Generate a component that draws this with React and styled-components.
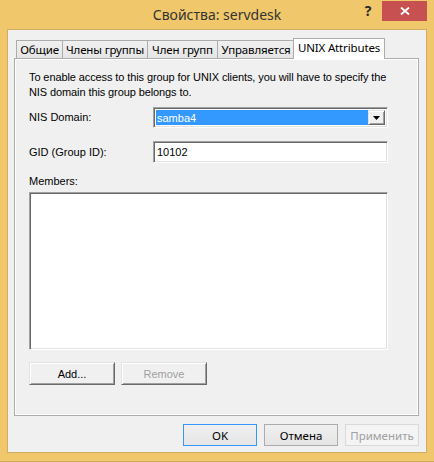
import React from 'react';
import styled, { createGlobalStyle } from 'styled-components';

const Global = createGlobalStyle`
  html, body { margin: 0; padding: 0; background: #ffffff; }
  body { width: 434px; height: 462px; overflow: hidden; }
  * { box-sizing: border-box; }
`;

const uiFont = `"Segoe UI", "Noto Sans", "Liberation Sans", sans-serif`;
const dlgFont = `"Liberation Sans", Arial, sans-serif`;

const Frame = styled.div`
  width: 434px;
  height: 462px;
  background: #f0c86b;
  border-bottom: 1px solid #d2ad58;
  padding: 0 7px 8px 7px;
  display: flex;
  flex-direction: column;
`;

const TitleBar = styled.div`
  height: 29px;
  display: grid;
  grid-template-columns: 1fr auto 1fr;
  align-items: start;
`;

const Title = styled.div`
  grid-column: 2;
  font-family: ${uiFont};
  font-size: 14px;
  color: #333333;
  line-height: 30px;
  white-space: nowrap;
`;

const Controls = styled.div`
  grid-column: 3;
  justify-self: end;
  display: flex;
  align-items: flex-start;
`;

const HelpButton = styled.div`
  width: 28px;
  height: 21px;
  display: flex;
  align-items: center;
  justify-content: center;
  font-family: ${uiFont};
  font-weight: bold;
  font-size: 14px;
  color: #2a2a2a;
`;

const CloseButton = styled.div`
  width: 45px;
  height: 20px;
  margin-top: 1px;
  background: #c75050;
  display: flex;
  align-items: center;
  justify-content: center;
`;

const Client = styled.div`
  flex: 1;
  border: 1px solid #cfae62;
  background: #f0f0f0;
  padding: 8px 7px 6px 6px;
  display: flex;
  flex-direction: column;
`;

const TabRow = styled.div`
  height: 20px;
  display: flex;
  align-items: flex-end;
  padding-left: 2px;
  position: relative;
  z-index: 1;
`;

const Tab = styled.div`
  width: ${(p) => p.$w}px;
  font-family: ${uiFont};
  font-size: 11.5px;
  letter-spacing: -0.15px;
  color: #000;
  white-space: nowrap;
  border: 1px solid #acacac;
  border-bottom: none;
  display: flex;
  align-items: center;
  justify-content: center;
  height: ${(p) => (p.$active ? '21px' : '18px')};
  margin-bottom: ${(p) => (p.$active ? '-1px' : '0')};
  margin-left: ${(p) => (p.$active ? '-2px' : '-1px')};
  padding-bottom: ${(p) => (p.$active ? '3px' : '0')};
  background: ${(p) => (p.$active ? '#ffffff' : 'linear-gradient(#f0f0f0, #e5e5e5)')};
  position: relative;
  z-index: ${(p) => (p.$active ? 2 : 1)};
  &:first-child { margin-left: 0; }
`;

const Panel = styled.div`
  flex: 1;
  border: 1px solid #acacac;
  box-shadow: inset 1px 1px 0 #ffffff, inset -1px -1px 0 #ffffff;
  background: #f0f0f0;
  padding: 11px 28px 0 14px;
  display: flex;
  flex-direction: column;
  font-family: ${dlgFont};
  font-size: 11px;
  color: #000;
`;

const Description = styled.p`
  margin: 0;
  line-height: 15px;
  width: 370px;
  letter-spacing: -0.1px;
`;

const FieldRow = styled.div`
  display: grid;
  grid-template-columns: 124px 235px;
  align-items: center;
  margin-top: ${(p) => p.$gap}px;
`;

const Label = styled.div`
  line-height: 15px;
  white-space: nowrap;
  margin-top: ${(p) => p.$top || 0}px;
`;

const sunken = `
  border-style: solid;
  border-width: 1px;
  border-color: #a0a0a0 #ffffff #ffffff #a0a0a0;
  box-shadow: inset 1px 1px 0 #696969, inset -1px -1px 0 #e3e3e3;
`;

const Combo = styled.div`
  height: 21px;
  ${sunken}
  background: #ffffff;
  padding: 2px;
  display: flex;
`;

const ComboValue = styled.div`
  flex: 1;
  background: #3399ff;
  color: #ffffff;
  line-height: 16px;
  padding-left: 1px;
`;

const DropButton = styled.div`
  width: 17px;
  background: #f0f0f0;
  border-style: solid;
  border-width: 1px;
  border-color: #e3e3e3 #696969 #696969 #e3e3e3;
  box-shadow: inset 1px 1px 0 #ffffff, inset -1px -1px 0 #a0a0a0;
  display: flex;
  align-items: center;
  justify-content: center;
`;

const TextBox = styled.div`
  height: 22px;
  ${sunken}
  background: #ffffff;
  padding: 2px 3px;
  line-height: 16px;
`;

const ListBox = styled.div`
  margin-top: 3px;
  width: 359px;
  height: 158px;
  ${sunken}
  background: #ffffff;
`;

const ButtonRow = styled.div`
  display: flex;
  gap: ${(p) => p.$gap}px;
  margin-top: ${(p) => p.$top || 0}px;
`;

const ClassicButton = styled.div`
  width: 86px;
  height: 23px;
  background: #f0f0f0;
  border-style: solid;
  border-width: 1px;
  border-color: #e3e3e3 #696969 #696969 #e3e3e3;
  box-shadow: inset 1px 1px 0 #ffffff, inset -1px -1px 0 #a0a0a0;
  display: flex;
  align-items: center;
  justify-content: center;
  color: ${(p) => (p.$disabled ? '#a0a0a0' : '#000000')};
`;

const DialogButton = styled.div`
  width: 74px;
  height: 22px;
  font-family: ${uiFont};
  font-size: 11.5px;
  border: 1px solid ${(p) => (p.$default ? '#3399ff' : p.$disabled ? '#d9d9d9' : '#acacac')};
  background: ${(p) => (p.$disabled ? '#f4f4f4' : 'linear-gradient(#f0f0f0, #e5e5e5)')};
  color: ${(p) => (p.$disabled ? '#a0a0a0' : '#000000')};
  display: flex;
  align-items: center;
  justify-content: center;
`;

const Footer = styled.div`
  display: flex;
  justify-content: flex-end;
  gap: 7px;
  margin-top: 8px;
`;

export default function App() {
  return (
    <>
      <Global />
      <Frame>
        <TitleBar>
          <Title>Свойства: servdesk</Title>
          <Controls>
            <HelpButton>?</HelpButton>
            <CloseButton>
              <svg width="10" height="8" viewBox="0 0 10 8">
                <path d="M1 0.5 L9 7.5 M9 0.5 L1 7.5" stroke="#ffffff" strokeWidth="1.8" />
              </svg>
            </CloseButton>
          </Controls>
        </TitleBar>
        <Client>
          <TabRow>
            <Tab $w={47}>Общие</Tab>
            <Tab $w={86}>Члены группы</Tab>
            <Tab $w={71}>Член групп</Tab>
            <Tab $w={78}>Управляется</Tab>
            <Tab $w={92} $active>UNIX Attributes</Tab>
          </TabRow>
          <Panel>
            <Description>
              To enable access to this group for UNIX clients, you will have to specify the NIS domain this group belongs to.
            </Description>
            <FieldRow $gap={7}>
              <Label>NIS Domain:</Label>
              <Combo>
                <ComboValue>samba4</ComboValue>
                <DropButton>
                  <svg width="7" height="4" viewBox="0 0 7 4">
                    <path d="M0 0 H7 L3.5 4 Z" fill="#000000" />
                  </svg>
                </DropButton>
              </Combo>
            </FieldRow>
            <FieldRow $gap={13}>
              <Label>GID (Group ID):</Label>
              <TextBox>10102</TextBox>
            </FieldRow>
            <Label $top={11}>Members:</Label>
            <ListBox />
            <ButtonRow $gap={6} $top={12}>
              <ClassicButton>Add...</ClassicButton>
              <ClassicButton $disabled>Remove</ClassicButton>
            </ButtonRow>
          </Panel>
          <Footer>
            <DialogButton $default>OK</DialogButton>
            <DialogButton>Отмена</DialogButton>
            <DialogButton $disabled>Применить</DialogButton>
          </Footer>
        </Client>
      </Frame>
    </>
  );
}
